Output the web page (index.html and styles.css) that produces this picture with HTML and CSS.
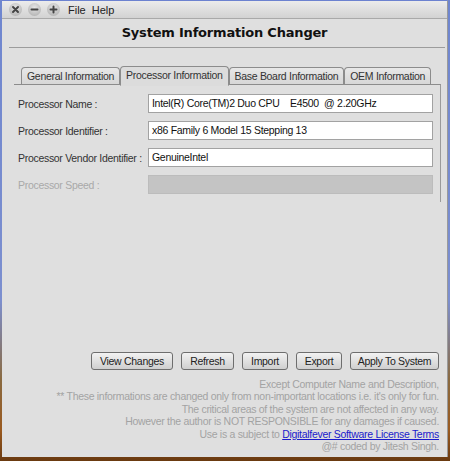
FILE: index.html
```html
<!DOCTYPE html>
<html>
<head>
<meta charset="utf-8">
<link rel="stylesheet" href="styles.css">
</head>
<body>
<div class="desk">
  <div class="window">
    <div class="titlebar">
      <span class="wbtn"><svg width="13" height="13" viewBox="0 0 13 13"><path d="M4 4L9 9M9 4L4 9" stroke="#444" stroke-width="2" stroke-linecap="round"/></svg></span>
      <span class="wbtn"><svg width="13" height="13" viewBox="0 0 13 13"><path d="M3.5 6.5H9.5" stroke="#444" stroke-width="2" stroke-linecap="round"/></svg></span>
      <span class="wbtn"><svg width="13" height="13" viewBox="0 0 13 13"><path d="M3.5 6.5H9.5M6.5 3.5V9.5" stroke="#444" stroke-width="2" stroke-linecap="round"/></svg></span>
      <span class="menu">File</span>
      <span class="menu">Help</span>
    </div>
    <div class="content">
      <h1 class="title">System Information Changer</h1>
      <div class="rule"></div>
      <div class="tabs">
        <div class="tab">General Information</div>
        <div class="tab sel">Processor Information</div>
        <div class="tab">Base Board Information</div>
        <div class="tab">OEM Information</div>
        <div class="tabfill"></div>
      </div>
      <div class="pane">
        <div class="row"><span class="lbl">Processor Name :</span><span class="field">Intel(R) Core(TM)2 Duo CPU    E4500  @ 2.20GHz</span></div>
        <div class="row"><span class="lbl">Processor Identifier :</span><span class="field">x86 Family 6 Model 15 Stepping 13</span></div>
        <div class="row"><span class="lbl">Processor Vendor Identifier :</span><span class="field">GenuineIntel</span></div>
        <div class="row"><span class="lbl dis">Processor Speed :</span><span class="field off"></span></div>
      </div>
      <div class="buttons">
        <span class="btn b1">View Changes</span>
        <span class="btn b2">Refresh</span>
        <span class="btn b3">Import</span>
        <span class="btn b4">Export</span>
        <span class="btn b5">Apply To System</span>
      </div>
      <div class="notes">
        <div>Except Computer Name and Description,</div>
        <div>** These informations are changed only from non-important locations i.e. it's only for fun.</div>
        <div>The critical areas of the system are not affected in any way.</div>
        <div>However the author is NOT RESPONSIBLE for any damages if caused.</div>
        <div>Use is a subject to <a class="link" href="#">Digitalfever Software License Terms</a></div>
        <div>@# coded by Jitesh Singh.</div>
      </div>
    </div>
  </div>
</div>
</body>
</html>
```

FILE: styles.css
```css
html, body {
  margin: 0;
  padding: 0;
  width: 450px;
  height: 461px;
  overflow: hidden;
}
body {
  font-family: "Liberation Sans", Arial, sans-serif;
  font-size: 10.5px;
  letter-spacing: -0.3px;
  color: #222;
}
.desk {
  width: 450px;
  height: 461px;
  background: linear-gradient(to bottom, #6f86cf 0px, #7c8fcf 300px, #8a6a40 380px, #9a5a20 430px, #6a3a10 461px);
  box-sizing: border-box;
  padding: 0 2px 4px 2px;
}
.window {
  height: 457px;
  background: #dfdfdf;
  border-top: 1px solid #6c82d0;
  border-right: 1px solid #9a9a9a;
  display: flex;
  flex-direction: column;
  box-sizing: border-box;
}
.titlebar {
  height: 17px;
  background: linear-gradient(to bottom, #ececec, #d2d2d2);
  border-bottom: 1px solid #a9a9a9;
  display: flex;
  align-items: center;
  padding-left: 7px;
  flex: none;
}
.wbtn {
  width: 13px;
  height: 13px;
  border-radius: 50%;
  background: radial-gradient(circle at 50% 35%, #e6e6e6, #a8a8a8);
  margin-right: 6px;
  display: flex;
}
.menu {
  font-size: 11px;
  letter-spacing: 0;
  color: #222;
  margin-left: 2px;
  margin-right: 4px;
}
.content {
  flex: 1;
  display: flex;
  flex-direction: column;
  padding: 0 0 0 6px;
}
.title {
  margin: 5px 0 0 0;
  font-family: "DejaVu Sans", Verdana, sans-serif;
  font-weight: bold;
  font-size: 13px;
  letter-spacing: -0.2px;
  text-align: center;
  color: #111;
  height: 18px;
  line-height: 18px;
  padding-right: 6px;
}
.rule {
  height: 1px;
  background: #9c9c9c;
  margin: 5px 2px 0 1px;
}
.tabs {
  display: flex;
  align-items: flex-end;
  margin: 17px 0 0 6px;
  width: 427px;
  height: 20px;
}
.tab {
  height: 17px;
  line-height: 17px;
  padding: 0 5px;
  border: 1px solid #8c8c8c;
  border-bottom: none;
  border-radius: 4px 4px 0 0;
  background: linear-gradient(to bottom, #e8e8e8, #d6d6d6);
  color: #333;
  margin-right: 0;
  box-shadow: inset 0 -1px 0 #8c8c8c;
  white-space: nowrap;
}
.tab:first-child { margin-left: 7px; }
.tab.sel {
  background: #dcdcdc;
  height: 18px;
  box-shadow: none;
  border-bottom: 1px solid #dcdcdc;
  position: relative;
  z-index: 1;
  margin-bottom: -1px;
}
.tabfill {
  flex: 1;
  align-self: stretch;
  border-bottom: 1px solid #8c8c8c;
}
.pane {
  width: 427px;
  margin-left: 6px;
  height: 118px;
  border-top: 1px solid #8c8c8c;
  border-right: 1px solid #9a9a9a;
  box-sizing: border-box;
  padding: 9px 0 0 4px;
  display: flex;
  flex-direction: column;
  gap: 8px;
  margin-top: -1px;
}
.row {
  display: flex;
  align-items: center;
  height: 19px;
}
.lbl {
  width: 130px;
  flex: none;
  white-space: nowrap;
  color: #333;
}
.lbl.dis { color: #a9a9a9; }
.field {
  width: 285px;
  height: 19px;
  box-sizing: border-box;
  border: 1px solid #a2a2a2;
  background: #fff;
  padding-left: 3px;
  line-height: 17px;
  color: #111;
  white-space: pre;
}
.field.off {
  background: #c4c4c4;
  border-color: #bcbcbc;
}
.buttons {
  display: flex;
  margin: 150px 0 0 83px;
  gap: 8px;
}
.btn {
  height: 18px;
  line-height: 16px;
  box-sizing: border-box;
  border: 1px solid #6e6e6e;
  border-radius: 3px;
  background: linear-gradient(to bottom, #f2f2f2, #cfcfcf);
  text-align: center;
  color: #222;
  white-space: nowrap;
}
.b1 { width: 82px; }
.b2 { width: 53px; }
.b3 { width: 46px; }
.b4 { width: 46px; }
.b5 { width: 89px; }
.notes {
  margin-top: 8px;
  text-align: right;
  padding-right: 8px;
  color: #a3a3a3;
  line-height: 12.4px;
}
.link {
  color: #1a1acc;
  text-decoration: underline;
}
```
